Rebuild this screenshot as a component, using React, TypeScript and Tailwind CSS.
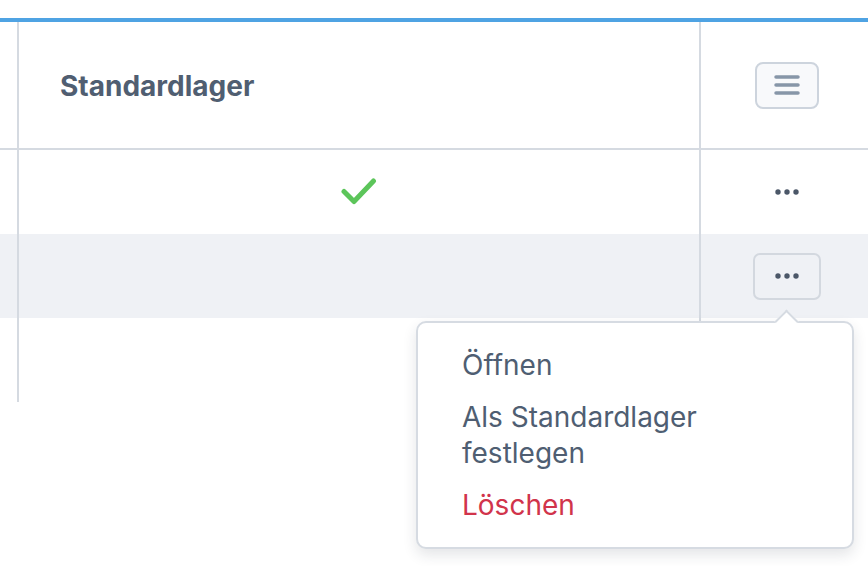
import React from "react";

const Dots = () => (
  <svg width="26" height="8" viewBox="0 0 26 8" className="block">
    <circle cx="4" cy="4" r="2.7" fill="#4b5768" />
    <circle cx="13" cy="4" r="2.7" fill="#4b5768" />
    <circle cx="22" cy="4" r="2.7" fill="#4b5768" />
  </svg>
);

const Check = () => (
  <svg width="36" height="28" viewBox="0 0 36 28" className="block">
    <polyline points="3,13.5 13,23.5 32.5,3" fill="none" stroke="#5cc55a" strokeWidth="5" strokeLinecap="round" strokeLinejoin="round" />
  </svg>
);

const Hamburger = () => (
  <svg width="26" height="20" viewBox="0 0 26 20" className="block">
    <line x1="2" y1="2" x2="24" y2="2" stroke="#8796a8" strokeWidth="3.5" strokeLinecap="round" />
    <line x1="2" y1="10" x2="24" y2="10" stroke="#8796a8" strokeWidth="3.5" strokeLinecap="round" />
    <line x1="2" y1="18" x2="24" y2="18" stroke="#8796a8" strokeWidth="3.5" strokeLinecap="round" />
  </svg>
);

const Row = ({ bg, children, action }: { bg: string; children?: React.ReactNode; action?: React.ReactNode }) => (
  <div className={`flex h-[84px] ${bg}`}>
    <div className="w-[19px] shrink-0 border-r-2 border-[#d5dae1]" />
    <div className="w-[682px] shrink-0 border-r-2 border-[#d5dae1] flex items-center justify-center">{children}</div>
    <div className="w-[172px] shrink-0 flex items-center justify-center">{action}</div>
  </div>
);

export default function App() {
  return (
    <div className="relative w-[868px] h-[566px] overflow-hidden bg-white font-['Inter',sans-serif]">
      <div className="h-[18px]" />
      <div className="border-t-4 border-[#4fa3e3]">
        <div className="flex h-[128px] border-b-2 border-[#d5dae1]">
          <div className="w-[19px] shrink-0 border-r-2 border-[#d5dae1]" />
          <div className="w-[682px] shrink-0 border-r-2 border-[#d5dae1] flex items-center pl-[41px]">
            <span className="text-[28px] font-bold text-[#505e71] pt-[2px]">Standardlager</span>
          </div>
          <div className="w-[172px] shrink-0 flex items-center justify-center">
            <button className="w-[64px] h-[47px] rounded-[8px] border-2 border-[#cdd4dd] bg-[#f8f9fb] flex items-center justify-center">
              <Hamburger />
            </button>
          </div>
        </div>
        <Row bg="bg-white" action={<Dots />}>
          <Check />
        </Row>
        <Row
          bg="bg-[#eff1f5]"
          action={
            <button className="w-[68px] h-[47px] rounded-[7px] border-2 border-[#d3d8df] bg-[#eff1f5] flex items-center justify-center">
              <Dots />
            </button>
          }
        />
        <div className="flex h-[84px]">
          <div className="w-[19px] shrink-0 border-r-2 border-[#d5dae1]" />
          <div className="w-[682px] shrink-0 border-r-2 border-[#d5dae1]" />
        </div>
      </div>

      <div className="absolute left-[416px] top-[321px] w-[438px] rounded-[10px] border-2 border-[#d6dbe2] bg-white py-4 pl-[44px] pr-6 shadow-[0_6px_14px_rgba(30,41,59,0.12)]">
        <div className="absolute -top-[10px] left-[360px] w-[17px] h-[17px] rotate-45 bg-white border-l-2 border-t-2 border-[#d6dbe2]" />
        <div className="relative flex flex-col text-[28px] leading-[36px] text-[#4f5e72]">
          <div className="py-2">Öffnen</div>
          <div className="py-2 w-[270px]">Als Standardlager festlegen</div>
          <div className="py-2 text-[#d1344b]">Löschen</div>
        </div>
      </div>
    </div>
  );
}
